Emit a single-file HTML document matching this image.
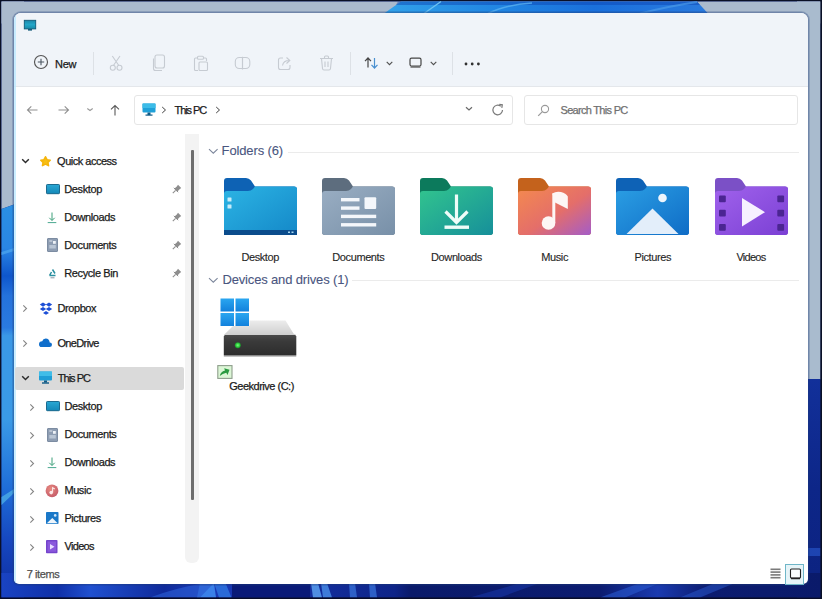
<!DOCTYPE html>
<html><head><meta charset="utf-8"><style>
html,body{margin:0;padding:0;width:822px;height:599px;overflow:hidden;background:#0a0f24}
.abs{position:absolute}
.t{position:absolute;white-space:nowrap;font-family:"Liberation Sans",sans-serif;line-height:1;-webkit-text-stroke:0.25px currentColor}
.i{position:absolute;overflow:visible}
</style></head><body>
<svg class="i" style="left:0;top:0" width="822" height="599" viewBox="0 0 822 599">
<defs>
<linearGradient id="bgTop" x1="384" y1="0" x2="708" y2="0" gradientUnits="userSpaceOnUse"><stop offset="0" stop-color="#32a2ea"/><stop offset="0.35" stop-color="#2186e2"/><stop offset="0.65" stop-color="#1a70dc"/><stop offset="1" stop-color="#2a7ade"/></linearGradient>
<linearGradient id="bgLeft" x1="0" y1="200" x2="0" y2="599" gradientUnits="userSpaceOnUse">
<stop offset="0" stop-color="#2a90e2"/><stop offset="0.12" stop-color="#2a86e4"/><stop offset="0.19" stop-color="#0e56cc"/><stop offset="0.24" stop-color="#2472dc"/><stop offset="0.32" stop-color="#2a7ae0"/><stop offset="0.34" stop-color="#3a98e6"/><stop offset="0.55" stop-color="#3a9ae6"/><stop offset="0.72" stop-color="#1f6ed8"/><stop offset="0.85" stop-color="#1648c0"/><stop offset="1" stop-color="#0e2ca0"/></linearGradient>
<linearGradient id="bgRight" x1="0" y1="379" x2="0" y2="599" gradientUnits="userSpaceOnUse"><stop offset="0" stop-color="#12309a"/><stop offset="0.5" stop-color="#0d2688"/><stop offset="1" stop-color="#0c2280"/></linearGradient>
<linearGradient id="bgBot" x1="0" y1="0" x2="822" y2="0" gradientUnits="userSpaceOnUse">
<stop offset="0" stop-color="#1a44c4"/><stop offset="0.07" stop-color="#1030a8"/><stop offset="0.11" stop-color="#2050d0"/><stop offset="0.2" stop-color="#0f2a9a"/><stop offset="0.25" stop-color="#1a3ab8"/><stop offset="0.48" stop-color="#0e2488"/><stop offset="0.5" stop-color="#0a1a6a"/><stop offset="0.73" stop-color="#0c1c70"/><stop offset="0.8" stop-color="#1a3ab0"/><stop offset="0.86" stop-color="#0c1c70"/><stop offset="1" stop-color="#0a1a6a"/></linearGradient>
</defs>
<rect width="822" height="599" fill="#0a1026"/>
<rect x="1.5" y="1.5" width="819" height="596" fill="#0c2286"/>
<rect x="1.5" y="1.5" width="819" height="22" fill="#aabacd"/>
<path d="M384 13.5L401 1.5H697L708 13.5V23H384Z" fill="url(#bgTop)"/>
<path d="M398 1.5H697L700 5H396Z" fill="#0a40b0" opacity="0.45"/>
<path d="M424 13.5L441 1.5" stroke="#6cc2f2" stroke-width="1.4"/>
<path d="M488 13.5Q505 5 532 3" stroke="#58b0f0" stroke-width="1.6" fill="none" opacity="0.8"/>
<path d="M640 13.5Q670 6 697 2" stroke="#4a9ae8" stroke-width="2" fill="none" opacity="0.7"/>
<path d="M1.5 1.5H24V201L1.5 209Z" fill="#aabacd"/>
<path d="M1.5 209L24 201V599H1.5Z" fill="url(#bgLeft)"/>
<path d="M1.5 252L14 248V251L1.5 255Z" fill="#4aa2ec" opacity="0.8"/>
<path d="M1.5 497L14 489V493L1.5 505Z" fill="#48a8e4" opacity="0.85"/>
<rect x="797" y="1.5" width="23.5" height="378" fill="#a9bbce"/>
<rect x="797" y="379" width="23.5" height="219" fill="url(#bgRight)"/>
<rect x="807" y="548" width="13.5" height="8" fill="#2a5ad0" opacity="0.6"/>
<rect x="1.5" y="573" width="819" height="24.5" fill="url(#bgBot)"/>
<path d="M197 597.5L200 583H214L216 597.5Z" fill="#3a80e8"/>
<path d="M214 583H225.5L231.5 597.5H219Z" fill="#2a6ad8"/>
<path d="M150 597.5Q175 588 205 583H214L200 597.5Z" fill="#2a5ad0" opacity="0.7"/>
<rect x="232" y="583" width="78" height="14.5" fill="#0a1a78"/>
<path d="M313 597.5L311 583H318L322 597.5Z" fill="#5aa0f0" opacity="0.85"/>
<path d="M323 597.5L321 583H327L332 597.5Z" fill="#4a90e8" opacity="0.8"/>
<path d="M350 597.5L349 583H355L357 597.5Z" fill="#3a78e0" opacity="0.7"/>
<path d="M370 597.5L369 583H375L377 597.5Z" fill="#3a78e0" opacity="0.7"/>
<path d="M470 597.5L520 583H540L500 597.5Z" fill="#1a3ab0" opacity="0.5"/>
<path d="M600 597.5L640 583H660L625 597.5Z" fill="#2a5ad0" opacity="0.6"/>
<path d="M680 597.5L715 583H735L700 597.5Z" fill="#2a5ad0" opacity="0.5"/>
<rect x="0" y="597.5" width="822" height="1.5" fill="#080c2a"/>
<rect x="820.5" y="0" width="1.5" height="599" fill="#0a1026"/>
</svg>
<div class="abs" id="win" style="left:12px;top:11px;width:798px;height:575px;border-radius:9px 9px 7px 7px;background:rgba(30,60,120,0.22)"></div>
<div class="abs" style="left:13px;top:12px;width:796px;height:573px;border-radius:8px 8px 6px 6px;background:rgba(30,60,120,0.25)"></div>
<div class="abs" style="left:14px;top:13px;width:794px;height:571px;border-radius:7px 7px 5px 5px;background:#ffffff;overflow:hidden">
  <div class="abs" style="left:0;top:0;width:794px;height:73px;background:#f0f4f9;border-bottom:1px solid #e4e7eb"></div>
  <div class="abs" style="left:0;top:0;width:1.5px;height:571px;background:rgba(185,232,255,0.75)"></div>
</div>
<svg class="i" style="left:23px;top:19px" width="14" height="13" viewBox="0 0 14 13"><defs><linearGradient id="ti" x1="0" y1="0" x2="0" y2="1"><stop offset="0" stop-color="#1c86a8"/><stop offset="0.5" stop-color="#22a6c8"/><stop offset="1" stop-color="#168aa8"/></linearGradient></defs><rect x="1.3" y="1.3" width="11.4" height="8.6" fill="url(#ti)" stroke="#0e5a78" stroke-width="0.9"/><rect x="5" y="10" width="4" height="1.6" fill="#145b7a"/></svg>
<svg class="i" style="left:33px;top:54px" width="16" height="16" viewBox="0 0 16 16"><circle cx="8" cy="8" r="6.5" fill="none" stroke="#555" stroke-width="1.15"/><path d="M8 4.8V11.2M4.8 8H11.2" stroke="#4a5560" stroke-width="1.1"/></svg>
<div class="t" style="left:55.00px;top:59.19px;font-size:11px;color:#1a1a1a;letter-spacing:-0.3px;font-weight:normal;">New</div>
<div class="abs" style="left:93px;top:52px;width:1px;height:23px;background:#dde1e6"></div>
<div class="abs" style="left:350px;top:52px;width:1px;height:23px;background:#dde1e6"></div>
<div class="abs" style="left:452px;top:52px;width:1px;height:23px;background:#dde1e6"></div>
<svg class="i" style="left:108px;top:55px" width="16" height="17" viewBox="0 0 16 17"><path d="M4.3 1L10.8 10.5M12 1L5.4 10.5" stroke="#c6cbd2" stroke-width="1.1" fill="none"/><circle cx="4.8" cy="12.8" r="2.5" fill="none" stroke="#c6cbd2" stroke-width="1.1"/><circle cx="11.5" cy="12.8" r="2.5" fill="none" stroke="#c6cbd2" stroke-width="1.1"/></svg>
<svg class="i" style="left:152px;top:54px" width="15" height="18" viewBox="0 0 15 18"><rect x="3" y="1" width="9.5" height="13" rx="2" fill="none" stroke="#c6cbd2" stroke-width="1.1"/><path d="M1.5 4.5V14.5Q1.5 16.5 3.5 16.5H10" fill="none" stroke="#c6cbd2" stroke-width="1.1"/></svg>
<svg class="i" style="left:193px;top:55px" width="16" height="17" viewBox="0 0 16 17"><path d="M4 3H2.5Q1.5 3 1.5 4V14.5Q1.5 15.5 2.5 15.5H5" fill="none" stroke="#c6cbd2" stroke-width="1.1"/><rect x="4.5" y="1.2" width="6" height="3" rx="1" fill="none" stroke="#c6cbd2" stroke-width="1.1"/><path d="M11 3H12.5Q13.5 3 13.5 4V6" fill="none" stroke="#c6cbd2" stroke-width="1.1"/><rect x="6" y="7" width="8.5" height="8.5" rx="1" fill="none" stroke="#c6cbd2" stroke-width="1.1"/></svg>
<svg class="i" style="left:234px;top:56px" width="18" height="15" viewBox="0 0 18 15"><rect x="1.3" y="1.5" width="14.5" height="11" rx="4" fill="none" stroke="#c6cbd2" stroke-width="1.1"/><path d="M8.5 0.8V13.5" stroke="#c6cbd2" stroke-width="1.2"/></svg>
<svg class="i" style="left:277px;top:55px" width="16" height="16" viewBox="0 0 16 16"><path d="M6 3H3.5Q1.5 3 1.5 5V12.5Q1.5 14.5 3.5 14.5H11Q13 14.5 13 12.5V10" fill="none" stroke="#c6cbd2" stroke-width="1.1"/><path d="M5.5 10.5Q6.5 5.5 12 5.5M9.5 2.5L12.8 5.5L9.5 8.5" fill="none" stroke="#c6cbd2" stroke-width="1.1"/></svg>
<svg class="i" style="left:319px;top:55px" width="15" height="16" viewBox="0 0 15 16"><path d="M1 3.5H14M5.5 3.5V2Q5.5 1 6.5 1H8.5Q9.5 1 9.5 2V3.5M2.5 3.5L3.5 13.5Q3.7 15 5 15H10Q11.3 15 11.5 13.5L12.5 3.5M6 6.5V12M9 6.5V12" fill="none" stroke="#c6cbd2" stroke-width="1.1"/></svg>
<svg class="i" style="left:364px;top:57px" width="15" height="12" viewBox="0 0 15 12"><path d="M4 10.5V1.2M1 4.2L4 1L7 4.2" fill="none" stroke="#454545" stroke-width="1.2"/><path d="M10.5 1V10.8M7.5 7.8L10.5 11L13.5 7.8" fill="none" stroke="#4a90d0" stroke-width="1.2"/></svg>
<svg class="i" style="left:386px;top:61px" width="7" height="5" viewBox="0 0 7 5"><path d="M0.7 0.8L3.5 3.6L6.3 0.8" fill="none" stroke="#505050" stroke-width="1.1"/></svg>
<svg class="i" style="left:409px;top:57px" width="13" height="12" viewBox="0 0 13 12"><rect x="1" y="1.2" width="11" height="7.8" rx="1.5" fill="none" stroke="#454545" stroke-width="1.2"/><path d="M1.5 10H11.5" stroke="#555" stroke-width="1.3"/></svg>
<svg class="i" style="left:430px;top:61px" width="7" height="5" viewBox="0 0 7 5"><path d="M0.7 0.8L3.5 3.6L6.3 0.8" fill="none" stroke="#505050" stroke-width="1.1"/></svg>
<svg class="i" style="left:464px;top:62px" width="17" height="4" viewBox="0 0 17 4"><circle cx="2" cy="2" r="1.4" fill="#303030"/><circle cx="8.2" cy="2" r="1.4" fill="#303030"/><circle cx="14.4" cy="2" r="1.4" fill="#303030"/></svg>
<svg class="i" style="left:26px;top:104px" width="13" height="12" viewBox="0 0 13 12"><path d="M11.5 6H1.5M5.3 2.3L1.5 6L5.3 9.7" fill="none" stroke="#909090" stroke-width="1.1"/></svg>
<svg class="i" style="left:57px;top:104px" width="13" height="12" viewBox="0 0 13 12"><path d="M1.5 6H11.5M7.7 2.3L11.5 6L7.7 9.7" fill="none" stroke="#909090" stroke-width="1.1"/></svg>
<svg class="i" style="left:86px;top:107px" width="8" height="5" viewBox="0 0 8 5"><path d="M1.3 1.5L4 3.5L6.7 1.5" fill="none" stroke="#9a9a9a" stroke-width="1.1"/></svg>
<svg class="i" style="left:109px;top:104px" width="12" height="12" viewBox="0 0 12 12"><path d="M6 11.5V1.5M2 5.3L6 1.5L10 5.3" fill="none" stroke="#5a5a5a" stroke-width="1.1"/></svg>
<div class="abs" style="left:134px;top:95px;width:377px;height:28px;border:1px solid #e6e6e6;border-radius:3px;background:#fff"></div>
<svg class="i" style="left:142px;top:103px" width="14" height="13" viewBox="0 0 14 13"><rect x="0.5" y="0.5" width="13" height="9" rx="1" fill="#1fa0d8"/><rect x="0.5" y="0.5" width="13" height="4.5" fill="#3cbce8"/><rect x="5.5" y="9.5" width="3" height="2.5" fill="#0f5a86"/><rect x="3.5" y="11.5" width="7" height="1.2" fill="#0f5a86"/></svg>
<svg class="i" style="left:161px;top:106px" width="6" height="8" viewBox="0 0 6 8"><path d="M1.2 1L4.5 4L1.2 7" fill="none" stroke="#404040" stroke-width="1"/></svg>
<div class="t" style="left:174.60px;top:105.49px;font-size:11px;color:#1a1a1a;letter-spacing:-1.1px;font-weight:normal;">This PC</div>
<svg class="i" style="left:215px;top:106px" width="6" height="8" viewBox="0 0 6 8"><path d="M1.2 1L4.5 4L1.2 7" fill="none" stroke="#404040" stroke-width="1"/></svg>
<svg class="i" style="left:465px;top:106px" width="8" height="6" viewBox="0 0 8 6"><path d="M1 1.2L4 4L7 1.2" fill="none" stroke="#6a6a6a" stroke-width="1.2"/></svg>
<svg class="i" style="left:491px;top:103px" width="14" height="14" viewBox="0 0 14 14"><path d="M11.5 7A4.8 4.8 0 1 1 9.8 3.3" fill="none" stroke="#7a7a7a" stroke-width="1.2"/><path d="M8.3 1.4L11.3 1.8L10.8 4.8" fill="none" stroke="#7a7a7a" stroke-width="1.2"/></svg>
<div class="abs" style="left:524px;top:95px;width:272px;height:28px;border:1px solid #e6e6e6;border-radius:3px;background:#fff"></div>
<svg class="i" style="left:537px;top:104px" width="13" height="13" viewBox="0 0 13 13"><circle cx="8" cy="5" r="3.6" fill="none" stroke="#9a9a9a" stroke-width="1.1"/><path d="M5.4 7.6L1.2 11.8" stroke="#9a9a9a" stroke-width="1.2"/></svg>
<div class="t" style="left:560.50px;top:105.49px;font-size:11px;color:#707070;letter-spacing:-0.7px;font-weight:normal;">Search This PC</div>
<div class="abs" style="left:15px;top:367px;width:169px;height:23px;background:#dadada;border-radius:2px"></div>
<div class="abs" style="left:185px;top:134px;width:14px;height:429px;background:#f3f3f3;border-radius:0 0 6px 6px"></div>
<div class="abs" style="left:191px;top:149.5px;width:2.5px;height:350px;background:#6e6e6e;border-radius:1px"></div>
<svg class="i" style="left:20.5px;top:157.5px" width="9" height="6" viewBox="0 0 9 6"><path d="M1.2 1.3L4.5 4.5L7.8 1.3" fill="none" stroke="#2a2a2a" stroke-width="1.45"/></svg>
<svg class="i" style="left:39px;top:155px" width="13" height="12" viewBox="0 0 13 12"><path d="M6.5 1.8L8 4.7L11.2 5.2L8.9 7.4L9.5 10.6L6.5 9.1L3.5 10.6L4.1 7.4L1.8 5.2L5 4.7Z" fill="#f7bf14" stroke="#f5b50c" stroke-width="1.6" stroke-linejoin="round"/></svg>
<div class="t" style="left:57.10px;top:155.79px;font-size:11px;color:#1b1b1b;letter-spacing:-0.5px;font-weight:normal;">Quick access</div>
<svg class="i" style="left:45.5px;top:184px" width="14" height="10" viewBox="0 0 14 10"><defs><linearGradient id="dki" x1="0" y1="0" x2="0" y2="1"><stop offset="0" stop-color="#2aa8d4"/><stop offset="1" stop-color="#1488b8"/></linearGradient></defs><rect x="0.5" y="0.5" width="13" height="9.2" rx="0.8" fill="url(#dki)" stroke="#0f5f84" stroke-width="0.9"/></svg>
<div class="t" style="left:64.30px;top:183.99px;font-size:11px;color:#1b1b1b;letter-spacing:-0.4px;font-weight:normal;">Desktop</div>
<svg class="i" style="left:172px;top:183.5px" width="10" height="10" viewBox="0 0 10 10"><path d="M6 0.8L9.2 4L7.6 5.2L5.2 7.8L2.2 4.8L4.8 2.4Z" fill="#8e8e8e"/><path d="M1.8 3.8L6.2 8.2" stroke="#8e8e8e" stroke-width="1"/><path d="M3.6 6.4L0.8 9.2" stroke="#8e8e8e" stroke-width="1.1"/></svg>
<svg class="i" style="left:47px;top:212px" width="10" height="12" viewBox="0 0 10 12"><path d="M5 0.5V8.3M2.3 5.8L5 8.5L7.7 5.8" fill="none" stroke="#3a9e78" stroke-width="1"/><path d="M0.7 10.6H9.3" stroke="#4aa890" stroke-width="1"/></svg>
<div class="t" style="left:64.30px;top:212.29px;font-size:11px;color:#1b1b1b;letter-spacing:-0.4px;font-weight:normal;">Downloads</div>
<svg class="i" style="left:172px;top:211.8px" width="10" height="10" viewBox="0 0 10 10"><path d="M6 0.8L9.2 4L7.6 5.2L5.2 7.8L2.2 4.8L4.8 2.4Z" fill="#8e8e8e"/><path d="M1.8 3.8L6.2 8.2" stroke="#8e8e8e" stroke-width="1"/><path d="M3.6 6.4L0.8 9.2" stroke="#8e8e8e" stroke-width="1.1"/></svg>
<svg class="i" style="left:46.5px;top:238px" width="11" height="14" viewBox="0 0 11 14"><rect x="0.5" y="0.5" width="10" height="13" rx="0.5" fill="#8e9db2" stroke="#74849c" stroke-width="0.9"/><rect x="2.3" y="2.5" width="3" height="1" fill="#dfe6ee"/><rect x="6" y="3" width="2.8" height="2.8" fill="#eef2f7"/><rect x="2.3" y="7" width="6.5" height="3.5" fill="#b9c5d4"/></svg>
<div class="t" style="left:64.30px;top:240.09px;font-size:11px;color:#1b1b1b;letter-spacing:-0.4px;font-weight:normal;">Documents</div>
<svg class="i" style="left:172px;top:239.6px" width="10" height="10" viewBox="0 0 10 10"><path d="M6 0.8L9.2 4L7.6 5.2L5.2 7.8L2.2 4.8L4.8 2.4Z" fill="#8e8e8e"/><path d="M1.8 3.8L6.2 8.2" stroke="#8e8e8e" stroke-width="1"/><path d="M3.6 6.4L0.8 9.2" stroke="#8e8e8e" stroke-width="1.1"/></svg>
<svg class="i" style="left:46.5px;top:267.5px" width="11" height="12" viewBox="0 0 11 12"><path d="M5.5 1.5L8 5.5M8.5 7.5H2.5M2.5 7.5L4.5 4" fill="none" stroke="#2a8fa0" stroke-width="1.5"/><path d="M3.5 9.8H7.5" stroke="#8a96a4" stroke-width="1"/></svg>
<div class="t" style="left:64.30px;top:268.09px;font-size:11px;color:#1b1b1b;letter-spacing:-0.4px;font-weight:normal;">Recycle Bin</div>
<svg class="i" style="left:172px;top:267.6px" width="10" height="10" viewBox="0 0 10 10"><path d="M6 0.8L9.2 4L7.6 5.2L5.2 7.8L2.2 4.8L4.8 2.4Z" fill="#8e8e8e"/><path d="M1.8 3.8L6.2 8.2" stroke="#8e8e8e" stroke-width="1"/><path d="M3.6 6.4L0.8 9.2" stroke="#8e8e8e" stroke-width="1.1"/></svg>
<svg class="i" style="left:22px;top:304px" width="6" height="9" viewBox="0 0 6 9"><path d="M1.3 1.4L4.5 4.5L1.3 7.6" fill="none" stroke="#858585" stroke-width="1.1"/></svg>
<svg class="i" style="left:39px;top:302px" width="14" height="13" viewBox="0 0 14 13"><path d="M4 0.5L7.2 2.6L4 4.7L0.8 2.6Z M10 0.5L13.2 2.6L10 4.7L6.8 2.6Z M4 4.9L7.2 7L4 9.1L0.8 7Z M10 4.9L13.2 7L10 9.1L6.8 7Z M7 9L10 10.9L7 12.8L4 10.9Z" fill="#1d4fd6"/></svg>
<div class="t" style="left:57.40px;top:303.49px;font-size:11px;color:#1b1b1b;letter-spacing:-0.4px;font-weight:normal;">Dropbox</div>
<svg class="i" style="left:22px;top:339px" width="6" height="9" viewBox="0 0 6 9"><path d="M1.3 1.4L4.5 4.5L1.3 7.6" fill="none" stroke="#858585" stroke-width="1.1"/></svg>
<svg class="i" style="left:38px;top:337px" width="15" height="11" viewBox="0 0 15 11"><path d="M3.5 10H11.5Q14 10 14 7.8Q14 5.6 11.7 5.5Q11.2 1.5 7.7 1.5Q5 1.5 4.2 4.2Q1 4.4 1 7.2Q1 10 3.5 10Z" fill="#0f6ecb"/></svg>
<div class="t" style="left:57.40px;top:338.49px;font-size:11px;color:#1b1b1b;letter-spacing:-0.63px;font-weight:normal;">OneDrive</div>
<svg class="i" style="left:20.5px;top:374.5px" width="9" height="6" viewBox="0 0 9 6"><path d="M1.2 1.3L4.5 4.5L7.8 1.3" fill="none" stroke="#2a2a2a" stroke-width="1.45"/></svg>
<svg class="i" style="left:39px;top:371px" width="13" height="13" viewBox="0 0 13 13"><rect x="0" y="0.5" width="13" height="9" rx="1" fill="#1f9ed6"/><rect x="0" y="0.5" width="13" height="4.5" fill="#40bde8"/><rect x="5" y="9.5" width="3" height="2" fill="#0f5a86"/><rect x="3" y="11.3" width="7" height="1.4" fill="#0f5a86"/></svg>
<div class="t" style="left:57.80px;top:372.99px;font-size:11px;color:#1b1b1b;letter-spacing:-1.0px;font-weight:normal;">This PC</div>
<svg class="i" style="left:29px;top:402.7px" width="6" height="9" viewBox="0 0 6 9"><path d="M1.3 1.4L4.5 4.5L1.3 7.6" fill="none" stroke="#858585" stroke-width="1.1"/></svg>
<svg class="i" style="left:45.7px;top:401px" width="14" height="10" viewBox="0 0 14 10"><defs><linearGradient id="dki" x1="0" y1="0" x2="0" y2="1"><stop offset="0" stop-color="#2aa8d4"/><stop offset="1" stop-color="#1488b8"/></linearGradient></defs><rect x="0.5" y="0.5" width="13" height="9.2" rx="0.8" fill="url(#dki)" stroke="#0f5f84" stroke-width="0.9"/></svg>
<div class="t" style="left:64.40px;top:401.19px;font-size:11px;color:#1b1b1b;letter-spacing:-0.4px;font-weight:normal;">Desktop</div>
<svg class="i" style="left:29px;top:430.7px" width="6" height="9" viewBox="0 0 6 9"><path d="M1.3 1.4L4.5 4.5L1.3 7.6" fill="none" stroke="#858585" stroke-width="1.1"/></svg>
<svg class="i" style="left:46.5px;top:427.5px" width="11" height="14" viewBox="0 0 11 14"><rect x="0.5" y="0.5" width="10" height="13" rx="0.5" fill="#8e9db2" stroke="#74849c" stroke-width="0.9"/><rect x="2.3" y="2.5" width="3" height="1" fill="#dfe6ee"/><rect x="6" y="3" width="2.8" height="2.8" fill="#eef2f7"/><rect x="2.3" y="7" width="6.5" height="3.5" fill="#b9c5d4"/></svg>
<div class="t" style="left:64.40px;top:429.19px;font-size:11px;color:#1b1b1b;letter-spacing:-0.4px;font-weight:normal;">Documents</div>
<svg class="i" style="left:29px;top:458.6px" width="6" height="9" viewBox="0 0 6 9"><path d="M1.3 1.4L4.5 4.5L1.3 7.6" fill="none" stroke="#858585" stroke-width="1.1"/></svg>
<svg class="i" style="left:47px;top:456.5px" width="10" height="12" viewBox="0 0 10 12"><path d="M5 0.5V8.3M2.3 5.8L5 8.5L7.7 5.8" fill="none" stroke="#3a9e78" stroke-width="1"/><path d="M0.7 10.6H9.3" stroke="#4aa890" stroke-width="1"/></svg>
<div class="t" style="left:64.40px;top:457.09px;font-size:11px;color:#1b1b1b;letter-spacing:-0.4px;font-weight:normal;">Downloads</div>
<svg class="i" style="left:29px;top:486.8px" width="6" height="9" viewBox="0 0 6 9"><path d="M1.3 1.4L4.5 4.5L1.3 7.6" fill="none" stroke="#858585" stroke-width="1.1"/></svg>
<svg class="i" style="left:45.2px;top:483.5px" width="14" height="14" viewBox="0 0 14 14"><defs><radialGradient id="mi" cx="0.4" cy="0.35" r="0.7"><stop offset="0" stop-color="#e88a80"/><stop offset="1" stop-color="#c45a68"/></radialGradient></defs><circle cx="7" cy="6.8" r="6.4" fill="url(#mi)"/><circle cx="6.2" cy="8.6" r="1.8" fill="#fbe8e8"/><path d="M7.6 8.6V3.8L9.8 5" fill="none" stroke="#fbe8e8" stroke-width="1.1"/></svg>
<div class="t" style="left:64.40px;top:485.29px;font-size:11px;color:#1b1b1b;letter-spacing:-0.4px;font-weight:normal;">Music</div>
<svg class="i" style="left:29px;top:514.9px" width="6" height="9" viewBox="0 0 6 9"><path d="M1.3 1.4L4.5 4.5L1.3 7.6" fill="none" stroke="#858585" stroke-width="1.1"/></svg>
<svg class="i" style="left:46.3px;top:512.4px" width="13" height="13" viewBox="0 0 13 13"><rect x="0" y="0" width="12.5" height="12" rx="0.8" fill="#1a78c8"/><path d="M0.8 11.2L6.3 6L11.7 11.2Z" fill="#eef5fb"/><circle cx="9.2" cy="3.4" r="1.3" fill="#cfe6f8"/></svg>
<div class="t" style="left:64.40px;top:513.39px;font-size:11px;color:#1b1b1b;letter-spacing:-0.4px;font-weight:normal;">Pictures</div>
<svg class="i" style="left:29px;top:542.8px" width="6" height="9" viewBox="0 0 6 9"><path d="M1.3 1.4L4.5 4.5L1.3 7.6" fill="none" stroke="#858585" stroke-width="1.1"/></svg>
<svg class="i" style="left:46.3px;top:539.7px" width="12" height="14" viewBox="0 0 12 14"><rect x="0" y="0" width="11.5" height="13.3" rx="0.8" fill="#7444cc"/><rect x="1.5" y="1.5" width="8.5" height="10.3" fill="#8a58dc"/><path d="M4 4L8.5 6.7L4 9.4Z" fill="#e8dcff"/></svg>
<div class="t" style="left:64.40px;top:541.29px;font-size:11px;color:#1b1b1b;letter-spacing:-0.65px;font-weight:normal;">Videos</div>
<div class="t" style="left:26.70px;top:568.99px;font-size:11px;color:#505050;letter-spacing:-0.4px;font-weight:normal;">7 items</div>
<svg class="i" style="left:207.5px;top:148px" width="11" height="7" viewBox="0 0 11 7"><path d="M1 1.2L5.3 5.2L9.6 1.2" fill="none" stroke="#7d879c" stroke-width="1.1"/></svg>
<div class="t" style="left:221.60px;top:143.70px;font-size:13px;color:#4a5680;letter-spacing:-0.13px;font-weight:normal;-webkit-text-stroke:0.1px currentColor">Folders (6)</div>
<div class="abs" style="left:288px;top:152px;width:511px;height:1px;background:#ebebeb"></div>
<svg class="i" style="left:223.7px;top:177.5px" width="73" height="57" viewBox="0 0 73 57"><defs><linearGradient id="g0" x1="0" y1="0" x2="1" y2="1"><stop offset="0" stop-color="#2cb4e4"/><stop offset="1" stop-color="#1488c8"/></linearGradient></defs>
<path d="M3 0H22Q25 0 27 2.5L31 8.5H70Q73 8.5 73 11.5V54Q73 57 70 57H3Q0 57 0 54V3Q0 0 3 0Z" fill="#0e62b4"/>
<path d="M0 16Q0 13 3 13H24Q27 13 29 11L31 8.5H70Q73 8.5 73 11.5V54Q73 57 70 57H3Q0 57 0 54Z" fill="url(#g0)"/>
<rect x="0" y="52" width="73" height="5" rx="0" fill="#0b4c8c"/><path d="M0 52H73V54Q73 57 70 57H3Q0 57 0 54Z" fill="#0b4c8c"/><rect x="3.5" y="19.5" width="4" height="4" rx="0.5" fill="#c8ecfa"/><rect x="3.5" y="26.5" width="4" height="4" rx="0.5" fill="#c8ecfa"/><rect x="64" y="53.5" width="2" height="1.5" fill="#a9d8f0"/><rect x="67.5" y="53.5" width="2" height="1.5" fill="#a9d8f0"/></svg>
<svg class="i" style="left:321.9px;top:177.5px" width="73" height="57" viewBox="0 0 73 57"><defs><linearGradient id="g1" x1="0" y1="0" x2="1" y2="1"><stop offset="0" stop-color="#9aaec3"/><stop offset="1" stop-color="#7890a8"/></linearGradient></defs>
<path d="M3 0H22Q25 0 27 2.5L31 8.5H70Q73 8.5 73 11.5V54Q73 57 70 57H3Q0 57 0 54V3Q0 0 3 0Z" fill="#5d6d7e"/>
<path d="M0 16Q0 13 3 13H24Q27 13 29 11L31 8.5H70Q73 8.5 73 11.5V54Q73 57 70 57H3Q0 57 0 54Z" fill="url(#g1)"/>
<rect x="19" y="20" width="18.5" height="3.4" fill="#f4f7fb"/><rect x="19" y="28.4" width="18.5" height="3.4" fill="#f4f7fb"/><rect x="42.5" y="19.2" width="11.7" height="11.7" rx="1" fill="#f4f7fb"/><rect x="19" y="36.7" width="35.2" height="3.4" fill="#f4f7fb"/><rect x="19" y="45.1" width="35.2" height="3.4" fill="#f4f7fb"/></svg>
<svg class="i" style="left:420.0px;top:177.5px" width="73" height="57" viewBox="0 0 73 57"><defs><linearGradient id="g2" x1="0" y1="0" x2="1" y2="1"><stop offset="0" stop-color="#32c58e"/><stop offset="1" stop-color="#168f9a"/></linearGradient></defs>
<path d="M3 0H22Q25 0 27 2.5L31 8.5H70Q73 8.5 73 11.5V54Q73 57 70 57H3Q0 57 0 54V3Q0 0 3 0Z" fill="#0c7a5c"/>
<path d="M0 16Q0 13 3 13H24Q27 13 29 11L31 8.5H70Q73 8.5 73 11.5V54Q73 57 70 57H3Q0 57 0 54Z" fill="url(#g2)"/>
<path d="M36.5 16.5V45" stroke="#effcf8" stroke-width="3.2"/><path d="M25.5 33.5L36.5 44.5L47.5 33.5" fill="none" stroke="#effcf8" stroke-width="3.2"/><rect x="24.5" y="47.5" width="24.5" height="3.4" fill="#effcf8"/></svg>
<svg class="i" style="left:518.2px;top:177.5px" width="73" height="57" viewBox="0 0 73 57"><defs><linearGradient id="g3" x1="0" y1="0" x2="1" y2="1"><stop offset="0" stop-color="#f48a4e"/><stop offset="0.55" stop-color="#e46e6a"/><stop offset="1" stop-color="#a45cc8"/></linearGradient></defs>
<path d="M3 0H22Q25 0 27 2.5L31 8.5H70Q73 8.5 73 11.5V54Q73 57 70 57H3Q0 57 0 54V3Q0 0 3 0Z" fill="#c4621c"/>
<path d="M0 16Q0 13 3 13H24Q27 13 29 11L31 8.5H70Q73 8.5 73 11.5V54Q73 57 70 57H3Q0 57 0 54Z" fill="url(#g3)"/>
<circle cx="30.5" cy="45" r="6.8" fill="#fdf6f4"/><path d="M35.8 45V15.5" stroke="#fdf6f4" stroke-width="3"/><path d="M34.3 15.5Q38 13 43 14Q48 15.2 49.8 18.5V31L37 24.5Z" fill="#fdf6f4"/></svg>
<svg class="i" style="left:616.3px;top:177.5px" width="73" height="57" viewBox="0 0 73 57"><defs><linearGradient id="g4" x1="0" y1="0" x2="1" y2="1"><stop offset="0" stop-color="#2b9fe4"/><stop offset="1" stop-color="#0f6cc6"/></linearGradient></defs>
<path d="M3 0H22Q25 0 27 2.5L31 8.5H70Q73 8.5 73 11.5V54Q73 57 70 57H3Q0 57 0 54V3Q0 0 3 0Z" fill="#0e62b6"/>
<path d="M0 16Q0 13 3 13H24Q27 13 29 11L31 8.5H70Q73 8.5 73 11.5V54Q73 57 70 57H3Q0 57 0 54Z" fill="url(#g4)"/>
<path d="M10.5 56L36.5 30.5L62.5 56Z" fill="#e3eefa"/><circle cx="46.5" cy="20" r="4.3" fill="#eef5fc"/></svg>
<svg class="i" style="left:714.5px;top:177.5px" width="73" height="57" viewBox="0 0 73 57"><defs><linearGradient id="g5" x1="0" y1="0" x2="1" y2="1"><stop offset="0" stop-color="#a062ec"/><stop offset="1" stop-color="#7b40d4"/></linearGradient></defs>
<path d="M3 0H22Q25 0 27 2.5L31 8.5H70Q73 8.5 73 11.5V54Q73 57 70 57H3Q0 57 0 54V3Q0 0 3 0Z" fill="#7b50c6"/>
<path d="M0 16Q0 13 3 13H24Q27 13 29 11L31 8.5H70Q73 8.5 73 11.5V54Q73 57 70 57H3Q0 57 0 54Z" fill="url(#g5)"/>
<rect x="4" y="17.5" width="6.8" height="6.8" rx="1" fill="#4b2592"/><rect x="4" y="31.7" width="6.8" height="6.8" rx="1" fill="#4b2592"/><rect x="4" y="45.9" width="6.8" height="6.8" rx="1" fill="#4b2592"/><rect x="62.3" y="17.5" width="6.8" height="6.8" rx="1" fill="#4b2592"/><rect x="62.3" y="31.7" width="6.8" height="6.8" rx="1" fill="#4b2592"/><rect x="62.3" y="45.9" width="6.8" height="6.8" rx="1" fill="#4b2592"/><path d="M27 20V48.5L50 34.2Z" fill="#f6f0ff"/></svg>
<div class="t" style="left:200.20px;width:120px;text-align:center;-webkit-text-stroke:0.12px currentColor;top:252.49px;font-size:11px;color:#262626;letter-spacing:-0.4px">Desktop</div>
<div class="t" style="left:298.35px;width:120px;text-align:center;-webkit-text-stroke:0.12px currentColor;top:252.49px;font-size:11px;color:#262626;letter-spacing:-0.4px">Documents</div>
<div class="t" style="left:396.50px;width:120px;text-align:center;-webkit-text-stroke:0.12px currentColor;top:252.49px;font-size:11px;color:#262626;letter-spacing:-0.4px">Downloads</div>
<div class="t" style="left:494.65px;width:120px;text-align:center;-webkit-text-stroke:0.12px currentColor;top:252.49px;font-size:11px;color:#262626;letter-spacing:-0.4px">Music</div>
<div class="t" style="left:592.80px;width:120px;text-align:center;-webkit-text-stroke:0.12px currentColor;top:252.49px;font-size:11px;color:#262626;letter-spacing:-0.4px">Pictures</div>
<div class="t" style="left:690.95px;width:120px;text-align:center;-webkit-text-stroke:0.12px currentColor;top:252.49px;font-size:11px;color:#262626;letter-spacing:-0.75px">Videos</div>
<svg class="i" style="left:207.5px;top:277px" width="11" height="7" viewBox="0 0 11 7"><path d="M1 1.2L5.3 5.2L9.6 1.2" fill="none" stroke="#7d879c" stroke-width="1.1"/></svg>
<div class="t" style="left:222.40px;top:272.50px;font-size:13px;color:#4a5680;letter-spacing:-0.15px;font-weight:normal;-webkit-text-stroke:0.1px currentColor">Devices and drives (1)</div>
<div class="abs" style="left:352px;top:280px;width:447px;height:1px;background:#ebebeb"></div>
<svg class="i" style="left:219px;top:297px" width="80" height="62" viewBox="0 0 80 62"><defs><linearGradient id="wl" x1="0" y1="0" x2="0" y2="1"><stop offset="0" stop-color="#2aa6f0"/><stop offset="1" stop-color="#1281dc"/></linearGradient>
<linearGradient id="tf" x1="0" y1="0" x2="0" y2="1"><stop offset="0" stop-color="#ececec"/><stop offset="1" stop-color="#cfcfcf"/></linearGradient>
<linearGradient id="ff" x1="0" y1="0" x2="0" y2="1"><stop offset="0" stop-color="#4a4a4a"/><stop offset="0.3" stop-color="#3a3a3a"/><stop offset="1" stop-color="#2c2c2c"/></linearGradient><radialGradient id="led"><stop offset="0" stop-color="#7dff7d"/><stop offset="0.6" stop-color="#32d040"/><stop offset="1" stop-color="#1a8a2a"/></radialGradient></defs>
<rect x="1.5" y="1.5" width="13.5" height="13" fill="url(#wl)"/><rect x="16.5" y="1.5" width="13.5" height="13" fill="url(#wl)"/>
<rect x="1.5" y="16" width="13.5" height="13" fill="url(#wl)"/><rect x="16.5" y="16" width="13.5" height="13" fill="url(#wl)"/>
<path d="M30.5 23.5H66.5L74.5 36.5L77.3 38H4.8L14 29H30.5Z" fill="url(#tf)"/>
<rect x="4.8" y="38" width="72.5" height="21" rx="1.5" fill="url(#ff)"/>
<rect x="4.8" y="58" width="72.5" height="1.5" fill="#8a8a8a"/>
<circle cx="18.8" cy="48.2" r="3" fill="url(#led)"/></svg>
<svg class="i" style="left:217px;top:365px" width="16" height="15" viewBox="0 0 16 15"><rect x="0.8" y="0.6" width="14.2" height="12.8" fill="#dcf6d6" stroke="#8e9e8c" stroke-width="1.1"/><path d="M2.8 11Q3.5 6.5 8 5.5L7.2 3.2L12.5 4.8L10.5 10L9.3 7.8Q5.5 8.5 2.8 11Z" fill="#2a9a40"/></svg>
<div class="t" style="left:229.30px;top:381.49px;font-size:11px;color:#1b1b1b;letter-spacing:-0.5px;font-weight:normal;">Geekdrive (C:)</div>
<svg class="i" style="left:770px;top:568px" width="11" height="11" viewBox="0 0 11 11"><rect x="0.5" y="0.5" width="10" height="1.6" fill="#7a7a7a"/><rect x="0.5" y="3.3" width="10" height="1.6" fill="#7a7a7a"/><rect x="0.5" y="6.1" width="10" height="1.6" fill="#7a7a7a"/><rect x="0.5" y="8.9" width="10" height="1.6" fill="#7a7a7a"/></svg>
<div class="abs" style="left:785px;top:564px;width:17px;height:19px;border:1px solid #6fb6c8;background:#e6f4f8"></div>
<svg class="i" style="left:789px;top:568px" width="13" height="12" viewBox="0 0 13 12"><rect x="1.5" y="1" width="10" height="9" rx="1" fill="#fafdfe" stroke="#222" stroke-width="1.1"/><path d="M2 10.5H11" stroke="#222" stroke-width="1.5"/></svg>
</body></html>
